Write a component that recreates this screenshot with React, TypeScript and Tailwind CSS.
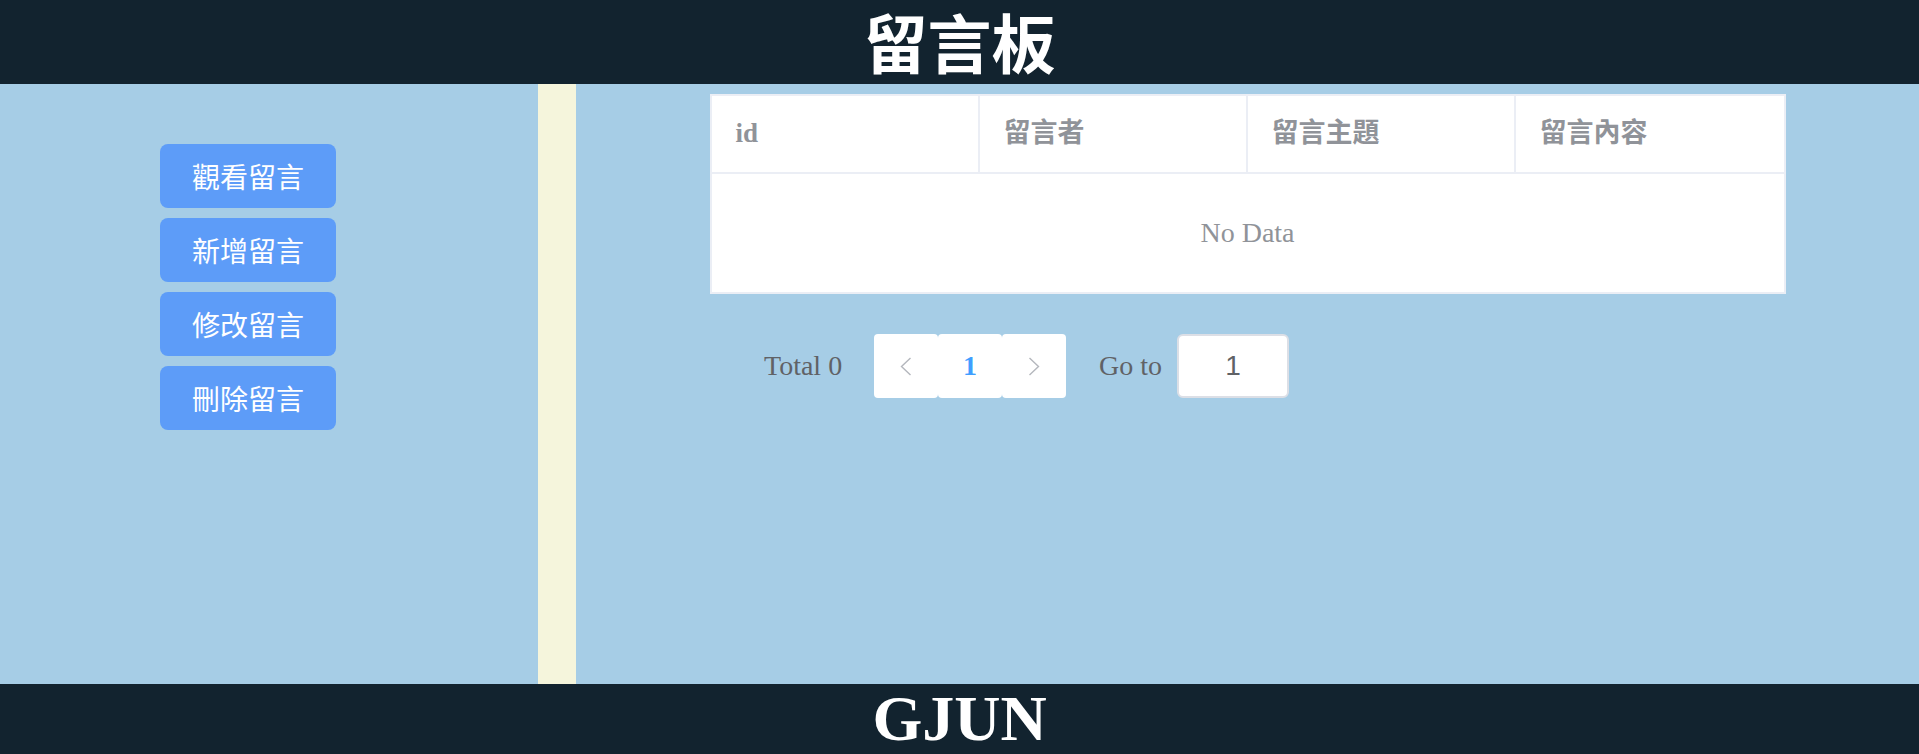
import React from "react";

const serif = { fontFamily: '"Liberation Serif", "Noto Sans CJK TC", serif' };

function Chevron({ dir }: { dir: "left" | "right" }) {
  return (
    <svg width="12" height="19" viewBox="0 0 12 19" fill="none">
      {dir === "left" ? (
        <polyline points="10.5,1 1.5,9.5 10.5,18" stroke="#b4b7bd" strokeWidth="1.4" />
      ) : (
        <polyline points="1.5,1 10.5,9.5 1.5,18" stroke="#b4b7bd" strokeWidth="1.4" />
      )}
    </svg>
  );
}

export default function App() {
  const menu = ["觀看留言", "新增留言", "修改留言", "刪除留言"];
  const cols = ["id", "留言者", "留言主題", "留言內容"];
  return (
    <div className="flex h-[754px] w-full flex-col">
      <header className="flex h-[84px] items-center justify-center bg-[#12232f]">
        <h1 className="pb-[4px] text-[64px] font-bold leading-[80px] text-white [font-family:'Noto_Sans_CJK_TC',sans-serif]">
          留言板
        </h1>
      </header>
      <div className="flex h-[600px]">
        <aside className="flex w-[538px] flex-col gap-[10px] bg-[#a6cde6] pl-[160px] pt-[60px]">
          {menu.map((m) => (
            <button
              key={m}
              className="flex h-[64px] w-[176px] items-center justify-center rounded-[8px] bg-[#5d9cf8] text-[28px] leading-none text-white [font-family:'Noto_Sans_CJK_TC',sans-serif]"
            >
              {m}
            </button>
          ))}
        </aside>
        <div className="w-[38px] bg-[#f5f5dc]" />
        <main className="flex-1 bg-[#a6cde6] pt-[10px]">
          <div className="mx-auto w-[1076px] border-2 border-[#ebeef5] bg-white">
            <div className="grid h-[78px] grid-cols-4 border-b-2 border-[#ebeef5]">
              {cols.map((c, i) => (
                <div
                  key={c}
                  className={`flex items-center pl-[24px] pb-[2px] text-[27px] font-bold text-[#909399] ${i < 3 ? "border-r-2 border-[#ebeef5]" : ""}`}
                  style={serif}
                >
                  {c}
                </div>
              ))}
            </div>
            <div className="flex h-[118px] items-center justify-center text-[28px] text-[#909399]" style={serif}>
              No Data
            </div>
          </div>
          <div className="ml-[188px] mt-[40px] flex h-[64px] items-center" style={serif}>
            <span className="w-[110px] text-[28px] text-[#606266]">Total 0</span>
            <div className="flex">
              <div className="flex h-[64px] w-[64px] items-center justify-center rounded-[4px] bg-white">
                <Chevron dir="left" />
              </div>
              <div className="flex h-[64px] w-[64px] items-center justify-center rounded-[4px] bg-white text-[28px] font-bold text-[#409eff]">
                1
              </div>
              <div className="flex h-[64px] w-[64px] items-center justify-center rounded-[4px] bg-white">
                <Chevron dir="right" />
              </div>
            </div>
            <span className="ml-[33px] w-[78px] text-[28px] text-[#606266]">Go to</span>
            <input
              readOnly
              value="1"
              className="h-[64px] w-[112px] rounded-[6px] border-2 border-[#dcdfe6] bg-white text-center text-[28px] text-[#606266] outline-none [font-family:'Liberation_Sans',sans-serif]"
            />
          </div>
        </main>
      </div>
      <footer className="flex h-[70px] items-center justify-center bg-[#12232f]">
        <span className="text-[64px] font-bold leading-none text-white" style={serif}>
          GJUN
        </span>
      </footer>
    </div>
  );
}
